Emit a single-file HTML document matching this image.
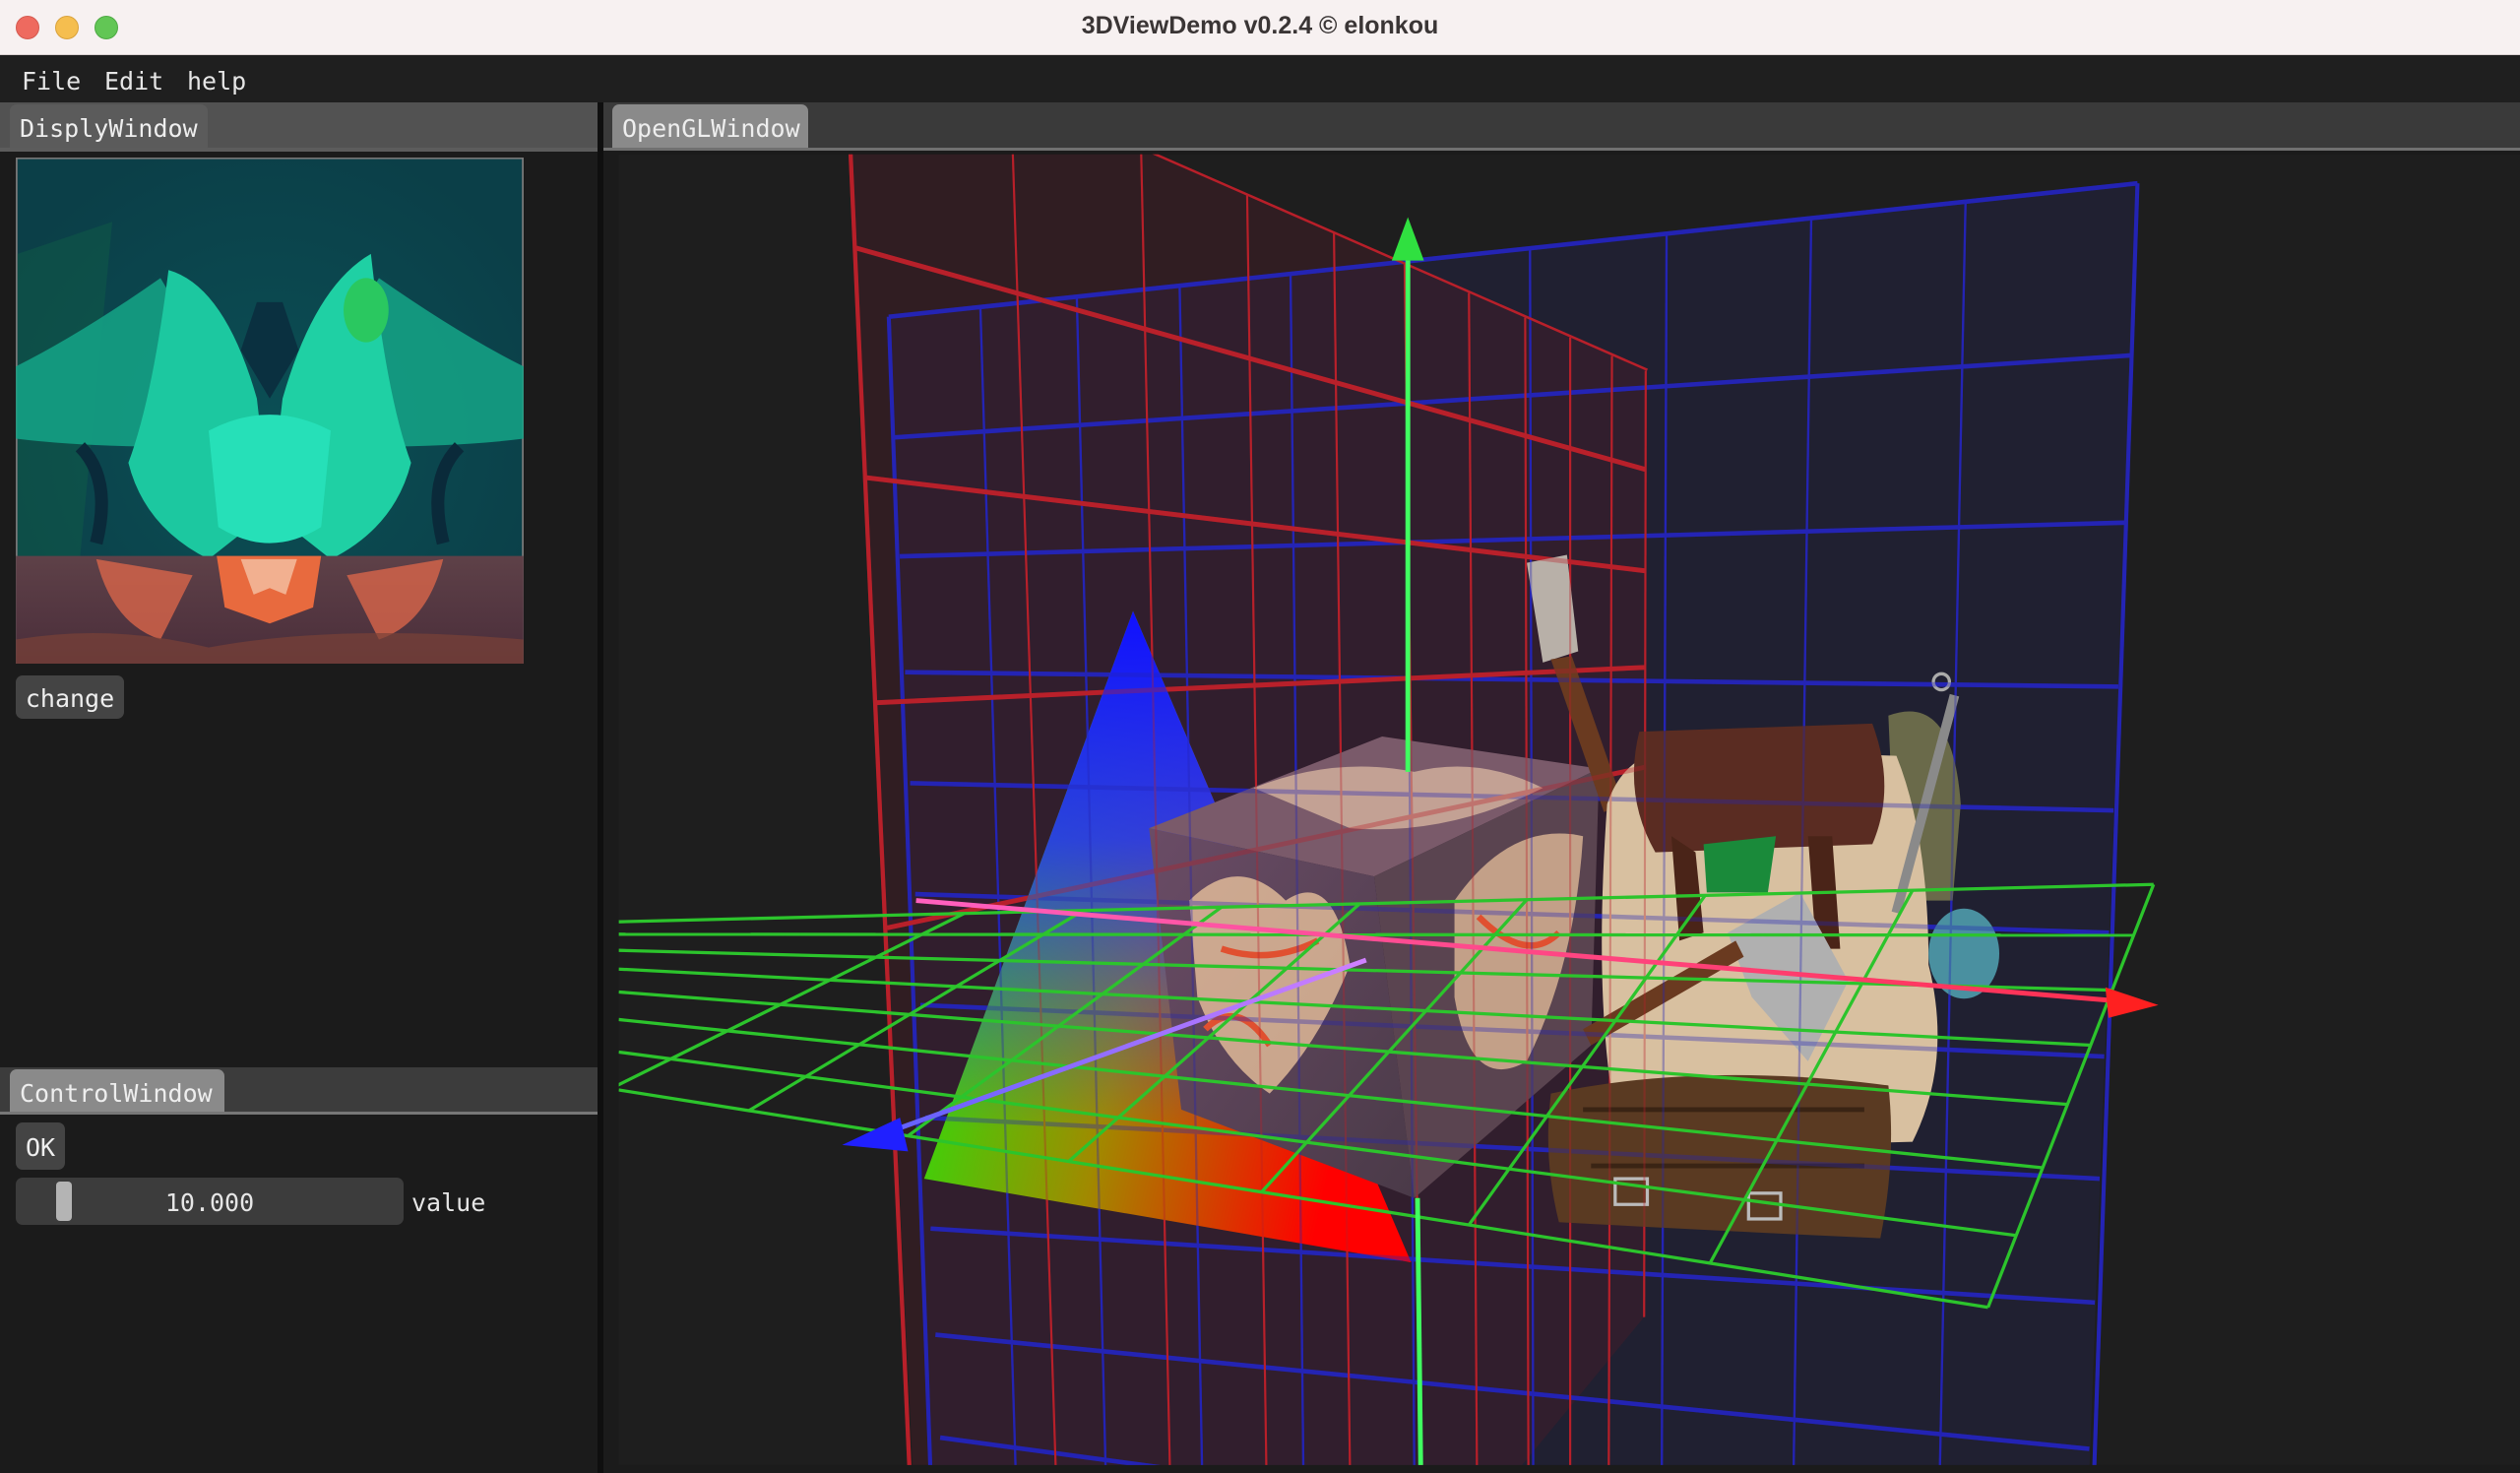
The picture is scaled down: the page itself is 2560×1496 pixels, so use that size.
<!DOCTYPE html>
<html><head><meta charset="utf-8"><style>
*{margin:0;padding:0;box-sizing:border-box}
html,body{width:2560px;height:1496px;overflow:hidden;background:#1b1b1b;font-family:"DejaVu Sans Mono","Liberation Mono",monospace;color:#e6e6e6}
.abs{position:absolute}
#title{left:0;top:0;width:2560px;height:56px;background:#f7f1f1;border-bottom:1px solid #d8d0d0}
#title .t{position:absolute;left:0;width:2560px;top:12px;text-align:center;font:bold 25px "Liberation Sans",sans-serif;color:#3a3535}
.dot{position:absolute;top:16px;width:24px;height:24px;border-radius:50%}
#menu{left:0;top:56px;width:2560px;height:48px;background:#1f1f1f;font-size:25px;line-height:54px}
#menu span{position:absolute;top:0}
.strip{height:46px}
.tab{position:absolute;top:2px;height:44px;border-radius:7px 7px 0 0;font-size:25px;line-height:50px;padding-left:10px;color:#eee}
.btn{background:#444;border-radius:7px;font-size:25px;color:#eee;text-align:center}
</style></head><body>
<div id="title" class="abs"><div class="dot" style="left:16px;background:#ee6a5f;border:1px solid #d45a50"></div><div class="dot" style="left:56px;background:#f5be4f;border:1px solid #d9a23c"></div><div class="dot" style="left:96px;background:#62c655;border:1px solid #4ea944"></div><div class="t">3DViewDemo v0.2.4 © elonkou</div></div>
<div id="menu" class="abs"><span style="left:22px">File</span><span style="left:106px">Edit</span><span style="left:190px">help</span></div>

<div class="abs" style="left:0;top:104px;width:608px;height:1392px;background:#1b1b1b"></div>
<div class="abs strip" style="left:0;top:104px;width:608px;background:#525252"></div>
<div class="tab" style="left:10px;top:106px;width:201px;background:#5b5b5b">DisplyWindow</div>
<div class="abs" style="left:0;top:150px;width:608px;height:4px;background:#5c5c5c"></div>

<svg class="abs" style="left:16px;top:160px" width="516" height="514" viewBox="0 0 316 315">
<defs>
<radialGradient id="tg" cx="50%" cy="55%" r="60%"><stop offset="0" stop-color="#0b4f55"/><stop offset="1" stop-color="#0b3f48"/></radialGradient>
<linearGradient id="bt" x1="0" y1="0" x2="0" y2="1"><stop offset="0" stop-color="#5e4148"/><stop offset="1" stop-color="#4a2d3a"/></linearGradient>
</defs>
<rect x="0" y="0" width="316" height="315" fill="url(#tg)" stroke="#777" stroke-width="2"/>
<path d="M1 60 L60 40 L40 248 L1 248Z" fill="#0f6048" opacity=".45"/>
<path d="M0 130 Q40 110 90 75 L140 160 L100 180 Q40 180 0 175Z" fill="#14a084" opacity=".9"/>
<path d="M316 130 Q276 110 226 75 L176 160 L216 180 Q276 180 316 175Z" fill="#14a084" opacity=".9"/>
<path d="M95 70 Q130 80 150 150 L158 220 L120 250 Q80 230 70 190 Q85 150 95 70Z" fill="#1cc8a0"/>
<path d="M221 60 Q186 80 166 150 L158 220 L196 250 Q236 230 246 190 Q231 150 221 60Z" fill="#1fd0a4"/>
<path d="M120 170 Q158 150 196 170 L190 230 Q158 250 126 230Z" fill="#26e0b8"/>
<path d="M140 120 L158 150 L176 120 L166 90 L150 90Z" fill="#0a3040"/>
<ellipse cx="218" cy="95" rx="14" ry="20" fill="#2ac860"/>
<path d="M40 180 Q60 200 50 240 M276 180 Q256 200 266 240" stroke="#0a2a3a" stroke-width="8" fill="none"/>
<path d="M0 248 L316 248 L316 315 L0 315Z" fill="url(#bt)"/>
<path d="M50 250 Q60 290 90 300 L110 260Z" fill="#d8654a" opacity=".8"/>
<path d="M266 250 Q256 290 226 300 L206 260Z" fill="#d8654a" opacity=".8"/>
<path d="M125 248 L190 248 L185 280 L158 290 L130 280Z" fill="#e86a3e"/>
<path d="M140 250 L175 250 L168 272 L158 268 L148 272Z" fill="#f2b090"/>
<path d="M0 300 Q60 290 120 305 Q200 290 316 300 L316 315 L0 315Z" fill="#7a4238" opacity=".7"/>
</svg>
<div class="abs btn" style="left:16px;top:686px;width:110px;height:44px;line-height:48px">change</div>

<div class="abs strip" style="left:0;top:1084px;width:608px;background:#3c3c3c"></div>
<div class="tab" style="left:10px;top:1086px;width:218px;background:#8a8a8a">ControlWindow</div>
<div class="abs" style="left:0;top:1129px;width:608px;height:3px;background:#777"></div>
<div class="abs btn" style="left:16px;top:1140px;width:50px;height:48px;line-height:52px">OK</div>
<div class="abs" style="left:16px;top:1196px;width:394px;height:48px;background:#3c3c3c;border-radius:7px"></div>
<div class="abs" style="left:57px;top:1200px;width:16px;height:40px;background:#b4b4b4;border-radius:4px"></div>
<div class="abs" style="left:16px;top:1196px;width:394px;height:48px;line-height:52px;text-align:center;font-size:25px">10.000</div>
<div class="abs" style="left:418px;top:1196px;line-height:52px;font-size:25px">value</div>

<div class="abs" style="left:607px;top:104px;width:6px;height:1392px;background:#0f0f0f"></div>

<div class="abs strip" style="left:613px;top:104px;width:1947px;background:#3a3a3a"></div>
<div class="tab" style="left:622px;top:106px;width:199px;background:#8a8a8a">OpenGLWindow</div>
<div class="abs" style="left:613px;top:150px;width:1947px;height:3px;background:#707070"></div>
<div class="abs" style="left:613px;top:153px;width:1947px;height:1343px;background:#1b1b1b"></div>

<svg id="gl" class="abs" style="left:0;top:0" width="2560" height="1496" viewBox="0 0 1568 916" preserveAspectRatio="none">
<defs>
<clipPath id="vp"><rect x="385" y="96" width="1183" height="815"/></clipPath>
<linearGradient id="gr" x1="0" y1="0" x2="1" y2="0.3"><stop offset="0" stop-color="#00ff10"/><stop offset=".55" stop-color="#a08a00"/><stop offset="1" stop-color="#ff0000"/></linearGradient>
<linearGradient id="bl" x1="0" y1="0" x2="0" y2="1"><stop offset="0" stop-color="#1010ff"/><stop offset=".35" stop-color="#2030ff" stop-opacity=".85"/><stop offset=".8" stop-color="#2040ff" stop-opacity="0"/></linearGradient>
<linearGradient id="cb" x1="0" y1="0" x2="1" y2="1"><stop offset="0" stop-color="#6a4c66"/><stop offset="1" stop-color="#4a3a48"/></linearGradient>
<linearGradient id="xa" x1="0" y1="0" x2="1" y2="0"><stop offset="0" stop-color="#ff60c0"/><stop offset="1" stop-color="#ff3050"/></linearGradient>
<linearGradient id="za" x1="0" y1="0" x2="1" y2="0"><stop offset="0" stop-color="#6060ff"/><stop offset="1" stop-color="#d080ff"/></linearGradient>
</defs>
<g clip-path="url(#vp)">
<rect x="385" y="96" width="1183" height="815" fill="#1e1e1e"/>
<polygon points="553,197 1330,114 1300,916 580,916" fill="#24244a" opacity=".45"/>
<polygon points="525,11 1025,230 1023,819 943,916 568,916" fill="#4a1c28" opacity=".4"/>
<g id="back"></g>
<!-- triangle -->
<polygon points="705,380 575,733 878,785" fill="url(#gr)"/>
<polygon points="705,380 575,733 878,785" fill="url(#bl)"/>
<!-- cube -->
<polygon points="715,515 860,458 995,478 855,545" fill="#7a5a6a"/>
<polygon points="715,515 855,545 880,745 735,690" fill="url(#cb)"/>
<polygon points="855,545 995,478 990,650 880,745" fill="#5a4450"/>
<path d="M740 560 Q770 530 800 560 Q830 540 840 600 Q820 650 790 680 Q760 660 745 620Z" fill="#f0c8a0" opacity=".75"/>
<path d="M905 560 Q940 510 985 520 Q980 600 950 660 Q915 680 905 620Z" fill="#f0c8a0" opacity=".7"/>
<path d="M780 490 Q830 470 880 480 Q920 470 960 490 Q900 520 840 515Z" fill="#f4d0b0" opacity=".6"/>
<path d="M760 590 Q790 600 820 585 M920 570 Q950 600 970 580 M750 640 Q770 620 790 650" stroke="#e05030" stroke-width="4" fill="none"/>
<!-- backpack -->
<path d="M950 350 L975 345 L982 405 L960 412Z" fill="#b8b0a8"/>
<path d="M965 410 L978 408 L1010 500 L998 505Z" fill="#6a3a20"/>
<path d="M1175 445 Q1215 430 1220 500 L1215 560 L1180 560Z" fill="#6a6a4a"/>
<path d="M1000 500 Q1010 470 1040 465 L1180 470 Q1200 520 1200 600 Q1215 660 1190 710 L1010 715 Q990 640 1000 500Z" fill="#d8c0a0"/>
<path d="M1020 455 L1165 450 Q1180 490 1165 525 L1030 530 Q1010 495 1020 455Z" fill="#5a2c22"/>
<path d="M1040 520 L1055 530 L1060 580 L1045 585Z M1125 520 L1140 520 L1145 590 L1130 590Z" fill="#4a2418"/>
<path d="M1060 525 L1105 520 L1100 555 L1062 555Z" fill="#1a8a3a"/>
<path d="M1075 580 L1120 555 L1150 610 L1125 660 L1090 620Z" fill="#b0b0b0"/>
<path d="M985 640 L1080 585 L1085 595 L990 650Z" fill="#6a3a20"/>
<ellipse cx="1222" cy="593" rx="22" ry="28" fill="#4a90a0"/>
<rect x="1195" y="430" width="6" height="140" fill="#8a8a8a" transform="rotate(15 1198 500)"/>
<circle cx="1208" cy="424" r="5" fill="none" stroke="#aaa" stroke-width="2"/>
<path d="M965 680 Q1060 660 1175 675 Q1180 720 1170 770 Q1060 765 970 760 Q960 720 965 680Z" fill="#5a3a22"/>
<path d="M985 690 L1160 690 M990 725 L1160 725" stroke="#3a2414" stroke-width="3"/>
<rect x="1005" y="733" width="20" height="16" fill="none" stroke="#bbb" stroke-width="2"/>
<rect x="1088" y="742" width="20" height="16" fill="none" stroke="#bbb" stroke-width="2"/>
<g id="over" opacity=".35"></g>
<g id="green"></g>
<!-- axes -->
<line x1="876" y1="160" x2="876" y2="480" stroke="#40ff60" stroke-width="3"/>
<line x1="882" y1="745" x2="884" y2="912" stroke="#40ff60" stroke-width="3"/>
<polygon points="876,135 866,162 886,162" fill="#30e040"/>
<line x1="570" y1="560" x2="1312" y2="622" stroke="url(#xa)" stroke-width="3"/>
<polygon points="1343,625 1310,614 1312,633" fill="#ff2020"/>
<line x1="550" y1="705" x2="850" y2="597" stroke="url(#za)" stroke-width="3"/>
<polygon points="524,712 560,695 565,716" fill="#2020ff"/>
</g>
</svg>
<script>
function L(a,b,c,d,col,w){return '<line x1="'+a+'" y1="'+b+'" x2="'+c+'" y2="'+d+'" stroke="'+col+'" stroke-width="'+w+'"/>';}
var s='';
// blue
var BC='#2424b4';
var rows=[[197,114],[272,221],[346,325],[418,427],[487,504],[556,580],[625,657],[695,733],[764,810],[830,901],[894,990]];
rows.forEach(function(r){var xl=553+32*(r[0]-197)/697,xr=1330-30*(r[1]-114)/787;s+=L(xl,r[0],xr,r[1],BC,2.8);});
var bt=[553,610,670,734,803,875,952,1037,1127,1223,1330],bb=[579,632,688,748,811,880,954,1034,1116,1207,1303];
bt.forEach(function(x,i){var y=197-83*(x-553)/777;s+=L(x,y,bb[i],916,BC,i==0||i==10?2.5:1.4);});
// red
var RC='#b8202a';
var rt=[529,630,710,776,830,874,914,949,977,1003,1024],rb=[566,657,728,788,840,884,919,951,977,1001,1023];
rt.forEach(function(x,i){var y=Math.max(90,11+0.44*(x-525));s+=L(x,y,rb[i],i==10?819:916,RC,i==0?2.6:1.3);});
s+=L(525,11,1025,230,RC,1.5);
[[154,292],[297,355],[437,415],[577,477]].forEach(function(r){var xl=525+43*(r[0]-11)/901;s+=L(xl,r[0],1024,r[1],RC,3);});
document.getElementById('back').innerHTML=s;
document.getElementById('over').innerHTML=s;
// green
var g='',GC='#2cc42c';
var BLp=[600,568],BRp=[1340,550],FLp=[380,677],FRp=[1237,813];
var ff=[380,466,565,665,785,914,1064,1237],bk=[600,674,760,846,950,1061,1190,1340];
function on(p,q,x){return p[1]+(q[1]-p[1])*(x-p[0])/(q[0]-p[0]);}
ff.forEach(function(x,i){g+=L(x,on(FLp,FRp,x),bk[i],on(BLp,BRp,bk[i]),GC,2);});
[0,.12,.25,.38,.52,.67,.83,1].forEach(function(t){
var lx=BLp[0]+(FLp[0]-BLp[0])*t,ly=BLp[1]+(FLp[1]-BLp[1])*t,rx=BRp[0]+(FRp[0]-BRp[0])*t,ry=BRp[1]+(FRp[1]-BRp[1])*t;
var k=(ry-ly)/(rx-lx);g+=L(385,ly+k*(385-lx),rx,ry,GC,2);});
document.getElementById('green').innerHTML=g;
</script>
</body></html>
